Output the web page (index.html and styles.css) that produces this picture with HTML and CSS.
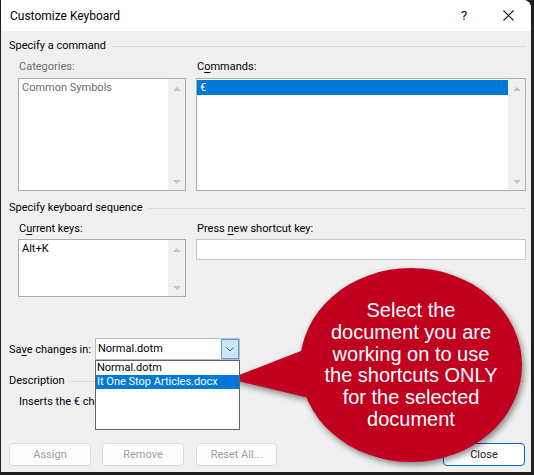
FILE: index.html
```html
<!DOCTYPE html>
<html>
<head>
  <title>Customize Keyboard</title>
  <link rel="stylesheet" href="styles.css">
</head>
<body>
  <div class="window">
    <div class="titlebar">
      <span class="title">Customize Keyboard</span>
      <span class="help">?</span>
      <span class="close-x">
        <svg width="11" height="11" viewBox="0 0 11 11"><path d="M0.5 0.5 L10.5 10.5 M10.5 0.5 L0.5 10.5" stroke="#1a1a1a" stroke-width="1.1" fill="none"/></svg>
      </span>
    </div>

    <div class="content">
      <!-- Specify a command -->
      <div class="group-title">Specify a command</div>
      <div class="cols">
        <div class="col-left">
          <div class="label disabled">Categories:</div>
          <div class="listbox tall">
            <div class="items">
              <div class="item disabled">Common Symbols</div>
            </div>
            <div class="scrollbar"><span class="arrow up"></span><span class="arrow down"></span></div>
          </div>
        </div>
        <div class="col-right">
          <div class="label">C<u>o</u>mmands:</div>
          <div class="listbox tall">
            <div class="items">
              <div class="item selected">€</div>
            </div>
            <div class="scrollbar"><span class="arrow up"></span><span class="arrow down"></span></div>
          </div>
        </div>
      </div>

      <!-- Specify keyboard sequence -->
      <div class="group-title second">Specify keyboard sequence</div>
      <div class="cols">
        <div class="col-left">
          <div class="label tight">C<u>u</u>rrent keys:</div>
          <div class="listbox short">
            <div class="items">
              <div class="item">Alt+K</div>
            </div>
            <div class="scrollbar"><span class="arrow up"></span><span class="arrow down"></span></div>
          </div>
        </div>
        <div class="col-right">
          <div class="label tight">Press <u>n</u>ew shortcut key:</div>
          <div class="keyinput"></div>
        </div>
      </div>

      <div class="save-row">
        <span class="save-label">Sa<u>v</u>e changes in:</span>
        <div class="combo">
          <span class="combo-value">Normal.dotm</span>
          <span class="combo-button">
            <svg width="8" height="5" viewBox="0 0 8 5"><path d="M0.5 0.5 L4 4 L7.5 0.5" stroke="#5a5a5a" stroke-width="1" fill="none"/></svg>
          </span>
          <div class="dropdown">
            <div class="dd-item">Normal.dotm</div>
            <div class="dd-item selected">It One Stop Articles.docx</div>
          </div>
        </div>
      </div>

      <div class="group-title desc">Description</div>
      <div class="desc-text">Inserts the € character</div>

      <div class="buttons">
        <button class="btn">Assign</button>
        <button class="btn">Remove</button>
        <button class="btn reset">Reset All...</button>
        <button class="btn close">Close</button>
      </div>
    </div>
  </div>

  <!-- red callout bubble over the dialog -->
  <div class="callout">
    <svg class="bubble" width="534" height="475" viewBox="0 0 534 475">
      <ellipse cx="411" cy="365" rx="111" ry="97"/>
      <polygon points="229,379 306,349 309,398"/>
    </svg>
    <div class="callout-text">Select the<br>document you are<br>working on to use<br>the shortcuts ONLY<br>for the selected<br>document</div>
  </div>
</body>
</html>
```

FILE: styles.css
```css
/* Customize Keyboard dialog */
body {
  margin: 0;
  width: 534px;
  height: 475px;
  position: relative;
  overflow: hidden;
  background: #1f1f1f;
  font-family: Roboto, "Noto Sans", sans-serif;
  font-size: 11px;
  color: #000;
}

u {
  text-decoration: underline;
  text-underline-offset: 2px;
}

.window {
  margin-left: 1px;
  width: 530px;
  height: 472px;
  background: #f0f0f0;
  border-top-right-radius: 8px;
  overflow: hidden;
}

.titlebar {
  height: 31px;
  background: #fff;
  display: flex;
  align-items: center;
  padding-left: 9px;
}

.title {
  flex: 1;
  font-size: 12px;
}

.help {
  width: 14px;
  text-align: center;
  font-size: 13px;
  margin-right: 32px;
}

.close-x {
  width: 11px;
  height: 11px;
  margin-right: 17px;
  display: flex;
}

.content {
  padding: 0 5px 0 8px;
}

.group-title {
  display: flex;
  align-items: center;
  height: 16px;
  line-height: 16px;
  margin-top: 7px;
  white-space: nowrap;
}

.group-title::after {
  content: "";
  flex: 1;
  border-top: 1px solid #dadada;
  margin-left: 5px;
}

.group-title.second {
  margin-top: 9px;
}

.group-title.desc {
  margin-top: 13px;
}

.cols {
  display: flex;
  gap: 10px;
  padding-left: 9px;
  margin-top: 5px;
}

.col-left {
  width: 168px;
}

.col-right {
  width: 330px;
}

.label {
  height: 16px;
  line-height: 16px;
  padding-left: 1px;
  margin-bottom: 3px;
  white-space: nowrap;
}

.label.tight {
  margin-bottom: 2px;
}

.disabled {
  color: #6d6d6d;
}

.listbox {
  display: flex;
  box-sizing: border-box;
  background: #fff;
  border: 1px solid #adadad;
}

.listbox.tall {
  height: 113px;
}

.listbox.short {
  height: 58px;
}

.items {
  flex: 1;
  padding-top: 1px;
}

.item {
  height: 15px;
  line-height: 15px;
  padding-left: 3px;
}

.item.selected {
  background: #0078d7;
  color: #fff;
}

.scrollbar {
  width: 17px;
  background: #f0f0f0;
  display: flex;
  flex-direction: column;
  justify-content: space-between;
  align-items: center;
  padding: 8px 0 6px;
}

.arrow {
  width: 0;
  height: 0;
  border-left: 4px solid transparent;
  border-right: 4px solid transparent;
}

.arrow.up {
  border-bottom: 4px solid #c4c4c4;
}

.arrow.down {
  border-top: 4px solid #c4c4c4;
}

.keyinput {
  height: 21px;
  box-sizing: border-box;
  background: #fff;
  border: 1px solid #c8c8c8;
}

.save-row {
  display: flex;
  align-items: center;
  height: 22px;
  margin-top: 41px;
}

.save-label {
  width: 86px;
  flex-shrink: 0;
  white-space: nowrap;
}

.combo {
  position: relative;
  width: 145px;
  height: 22px;
  box-sizing: border-box;
  background: #fff;
  border: 1px solid #bcbcbc;
  line-height: 20px;
}

.combo-value {
  padding-left: 2px;
}

.combo-button {
  position: absolute;
  top: 0;
  right: 0;
  width: 18px;
  height: 20px;
  box-sizing: border-box;
  background: #cce4f7;
  border: 1px solid #5aa0e8;
  display: flex;
  align-items: center;
  justify-content: center;
}

.dropdown {
  position: absolute;
  top: 21px;
  left: -1px;
  width: 145px;
  height: 70px;
  box-sizing: border-box;
  background: #fff;
  border: 1px solid #646464;
  z-index: 2;
}

.dd-item {
  height: 14px;
  line-height: 14px;
  padding-left: 1px;
  white-space: nowrap;
}

.dd-item.selected {
  background: #0078d7;
  color: #fff;
}

.desc-text {
  height: 16px;
  line-height: 16px;
  margin-top: 5px;
  padding-left: 10px;
}

.buttons {
  display: flex;
  margin-top: 33px;
}

.btn {
  width: 82px;
  height: 23px;
  padding: 0;
  box-sizing: border-box;
  border: 1px solid #dcdcdc;
  border-radius: 4px;
  background: #fdfdfd;
  color: #a0a0a0;
  font: inherit;
}

.btn + .btn {
  margin-left: 11px;
}

.btn.reset {
  width: 81px;
  margin-left: 12px;
}

.btn.close {
  margin-left: auto;
  margin-right: 1px;
  border-color: #0067c0;
  background: #fff;
  color: #1a1a1a;
}

/* callout */
.callout {
  position: absolute;
  left: 0;
  top: 0;
  width: 534px;
  height: 475px;
  pointer-events: none;
}

.bubble {
  fill: #c1001f;
  filter: drop-shadow(2px 3px 3px rgba(0, 0, 0, 0.45));
}

.callout-text {
  position: absolute;
  left: 300px;
  top: 300px;
  width: 222px;
  text-align: center;
  color: #fff;
  font-family: "Liberation Sans", Arial, sans-serif;
  font-size: 20px;
  line-height: 21.8px;
}
```
